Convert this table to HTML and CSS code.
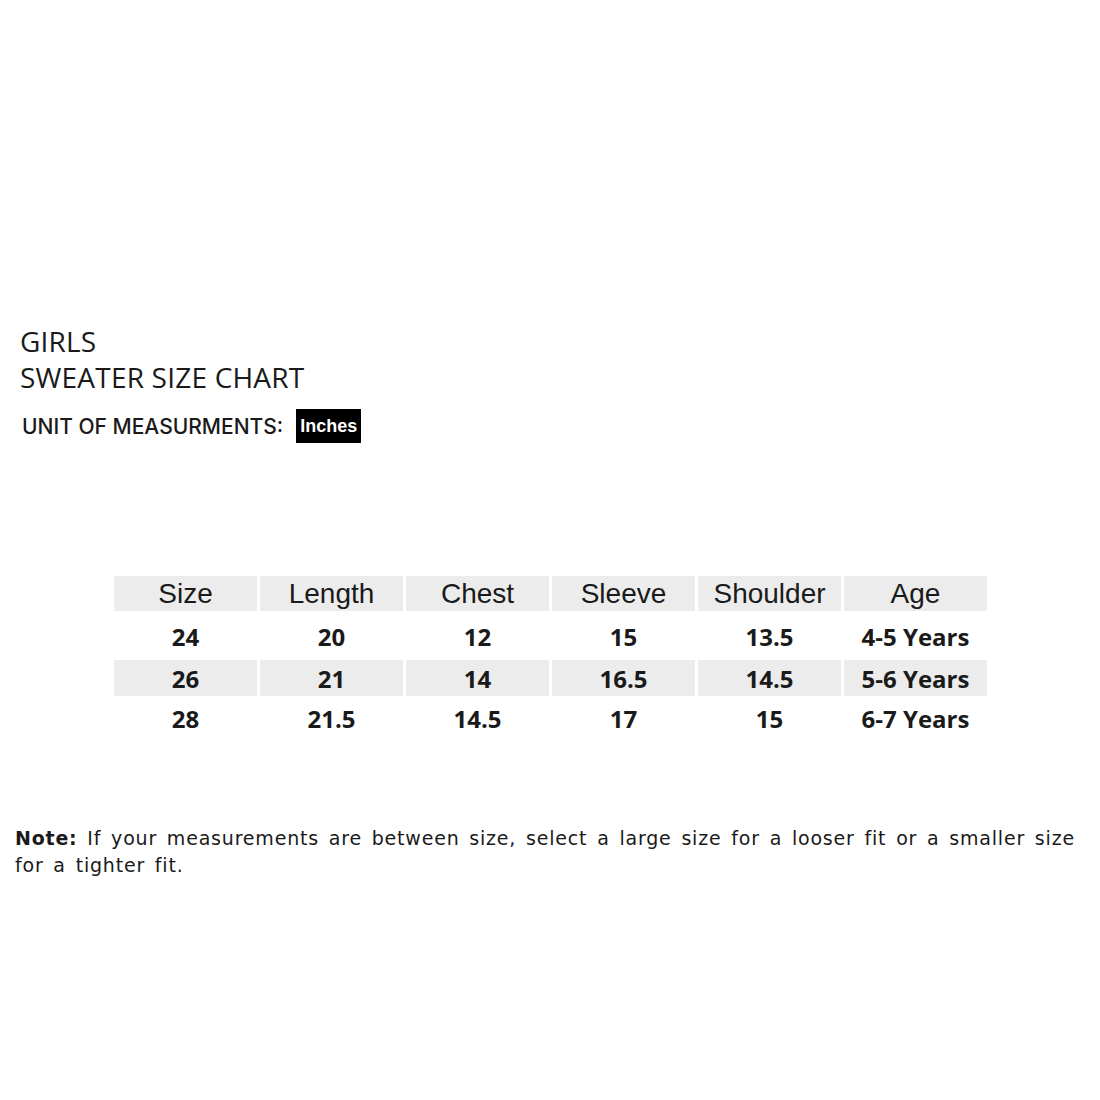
FILE: index.html
```html
<!DOCTYPE html>
<html lang="en">
<head>
<meta charset="utf-8">
<title>Girls Sweater Size Chart</title>
<link rel="stylesheet" href="styles.css">
</head>
<body>
<main class="page">
  <header class="heading">
    <h1 class="title">GIRLS<br>SWEATER SIZE CHART</h1>
    <div class="unit">
      <span class="unit-label">UNIT OF MEASURMENTS:</span>
      <span class="unit-badge">Inches</span>
    </div>
  </header>

  <section class="chart">
    <div class="row row-head">
      <div class="cell">Size</div>
      <div class="cell">Length</div>
      <div class="cell">Chest</div>
      <div class="cell">Sleeve</div>
      <div class="cell">Shoulder</div>
      <div class="cell">Age</div>
    </div>
    <div class="row row-data row-tall">
      <div class="cell">24</div>
      <div class="cell">20</div>
      <div class="cell">12</div>
      <div class="cell">15</div>
      <div class="cell">13.5</div>
      <div class="cell">4-5 Years</div>
    </div>
    <div class="row row-data row-shaded">
      <div class="cell">26</div>
      <div class="cell">21</div>
      <div class="cell">14</div>
      <div class="cell">16.5</div>
      <div class="cell">14.5</div>
      <div class="cell">5-6 Years</div>
    </div>
    <div class="row row-data row-last">
      <div class="cell">28</div>
      <div class="cell">21.5</div>
      <div class="cell">14.5</div>
      <div class="cell">17</div>
      <div class="cell">15</div>
      <div class="cell">6-7 Years</div>
    </div>
  </section>

  <p class="note"><strong>Note:</strong> If your measurements are between size, select a large size for a looser fit or a smaller size<br>for a tighter fit.</p>
</main>
</body>
</html>
```

FILE: styles.css
```css
html, body {
  margin: 0;
  padding: 0;
  background: #ffffff;
}

.page {
  width: 1100px;
  height: 1100px;
  box-sizing: border-box;
  padding-top: 323px;
  color: #1a1a1a;
}

.heading {
  display: flex;
  flex-direction: column;
}

.title {
  margin: 0 0 0 20px;
  font-family: "Open Sans", "Liberation Sans", sans-serif;
  font-weight: 400;
  font-size: 28px;
  line-height: 36px;
  letter-spacing: 0.2px;
  color: #1a1a1a;
}

.unit {
  display: flex;
  align-items: center;
  margin: 14px 0 0 22px;
  gap: 13px;
}

.unit-label {
  font-family: Inter, "Noto Sans", sans-serif;
  font-weight: 500;
  font-size: 21px;
  color: #1a1a1a;
}

.unit-badge {
  display: flex;
  align-items: center;
  height: 34px;
  padding: 0 4px;
  background: #000000;
  color: #ffffff;
  font-family: "Liberation Sans", Arial, sans-serif;
  font-weight: 700;
  font-size: 18px;
}

.chart {
  margin: 133px 0 0 114px;
  display: flex;
  flex-direction: column;
}

.row {
  display: grid;
  grid-template-columns: repeat(6, 143px);
  column-gap: 3px;
}

.cell {
  display: flex;
  align-items: center;
  justify-content: center;
}

.row-head {
  height: 35px;
}

.row-head .cell {
  background: #ececec;
  font-family: "Liberation Sans", Arial, sans-serif;
  font-size: 28px;
  font-weight: 400;
  color: #1a1a1a;
}

.row-data .cell {
  font-family: "Open Sans", "Liberation Sans", sans-serif;
  font-weight: 700;
  font-size: 24px;
  color: #1a1a1a;
}

.row-tall {
  height: 49px;
  padding-top: 1px;
  box-sizing: border-box;
}

.row-shaded {
  height: 36px;
}

.row-shaded .cell {
  background: #ececec;
}

.row-last {
  height: 44px;
}

.note {
  margin: 85px 0 0 15px;
  font-family: "DejaVu Sans", "Noto Sans", sans-serif;
  font-weight: 400;
  font-size: 19px;
  line-height: 27px;
  letter-spacing: 0.8px;
  word-spacing: 3px;
  color: #1a1a1a;
}

.note strong {
  font-weight: 700;
}
```
